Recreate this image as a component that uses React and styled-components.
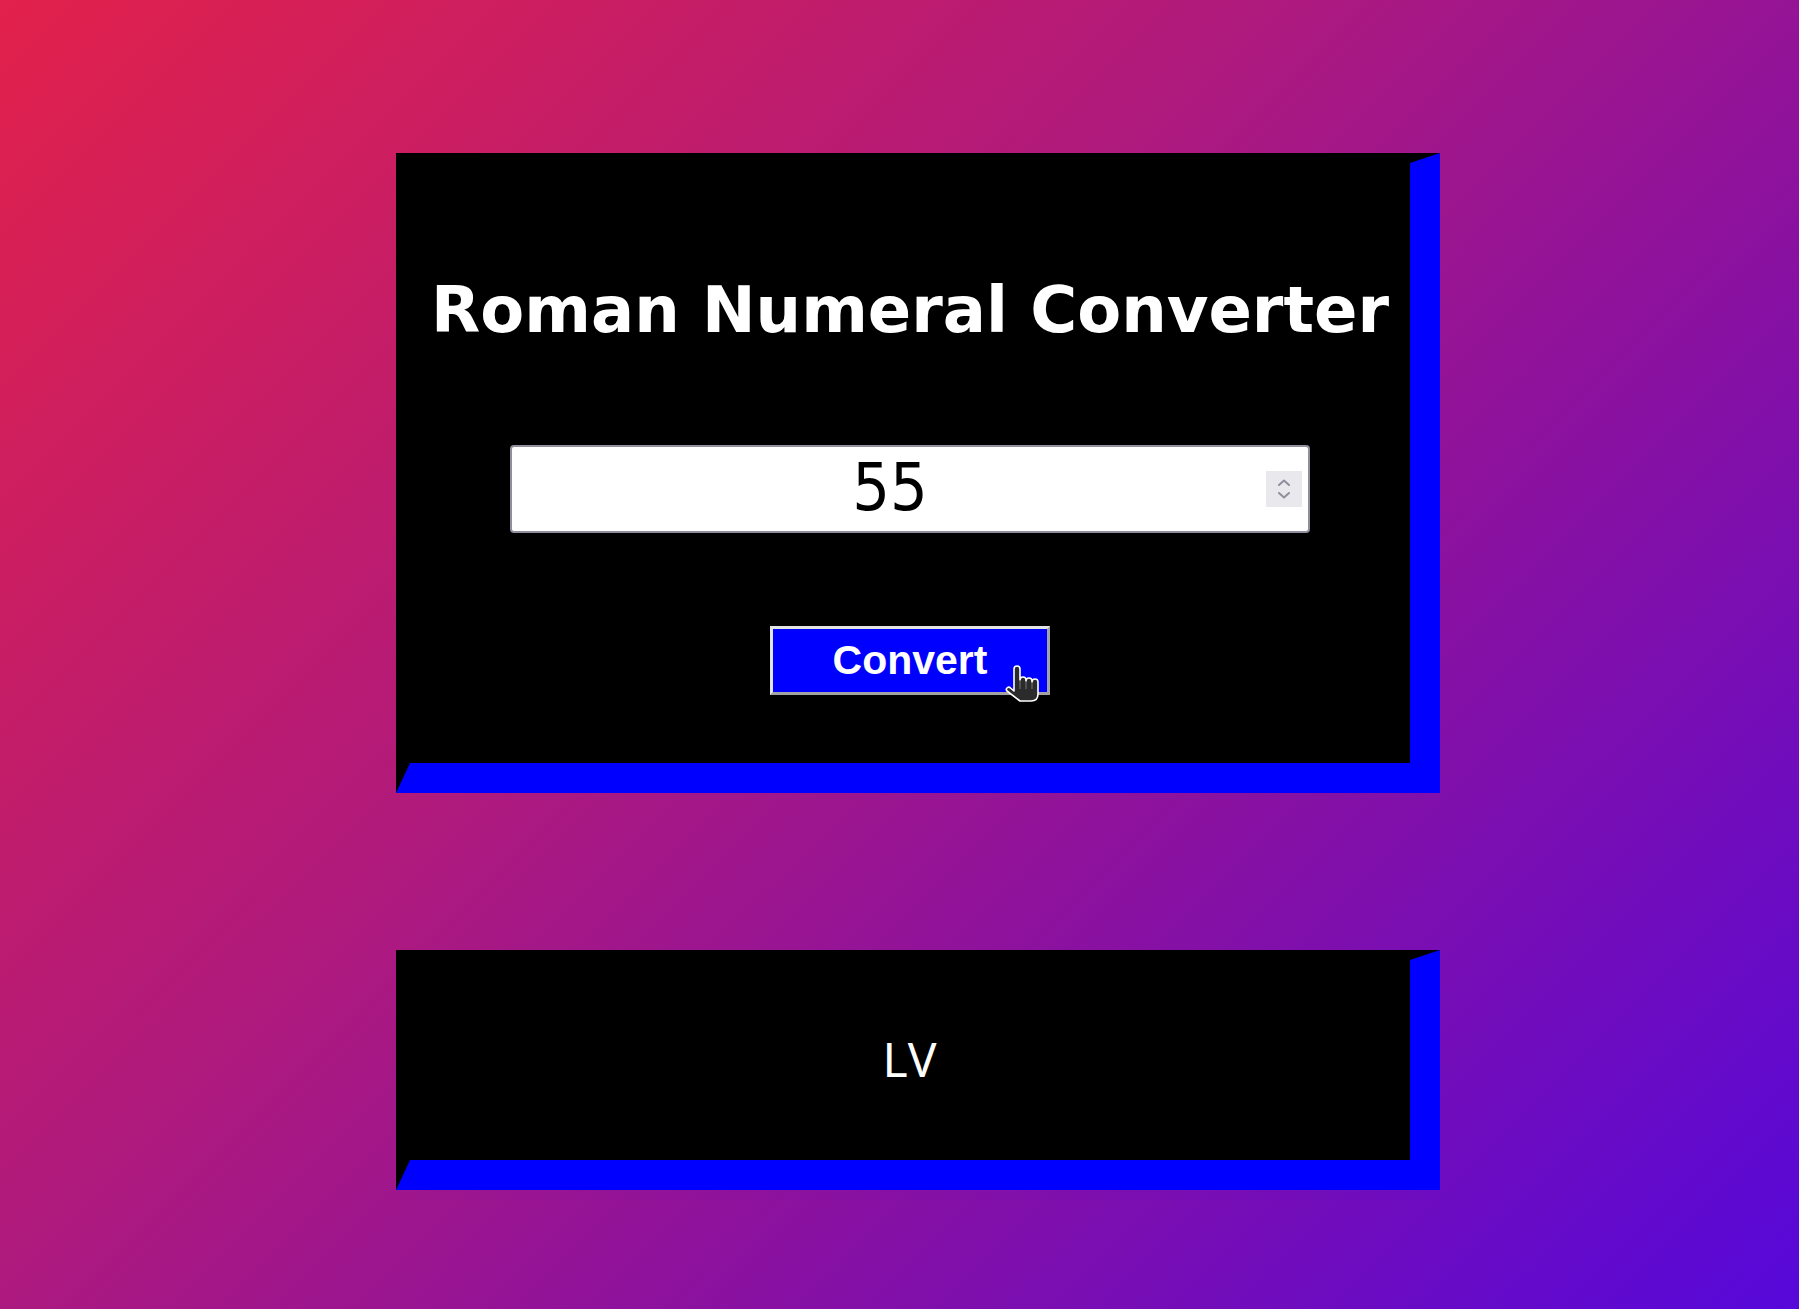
import React, { useState } from 'react'
import styled, { createGlobalStyle } from 'styled-components'

const BLUE = '#0000ff'

const GlobalStyle = createGlobalStyle`
  html, body {
    margin: 0;
    padding: 0;
    min-height: 100%;
  }
  body {
    min-height: 100vh;
    background: linear-gradient(135deg, #e2214b 0%, #b01a7c 40%, #8a11a0 65%, #5608da 100%);
    background-attachment: fixed;
  }
`

const Page = styled.main`
  display: flex;
  flex-direction: column;
  gap: 157px;
  padding: 153px 0 119px 396px;
`

const Card = styled.section`
  box-sizing: border-box;
  width: 1044px;
  height: ${(p) => p.$height}px;
  background: #000;
  border-style: solid;
  border-width: 10px 30px 30px 14px;
  border-color: #000 ${BLUE} ${BLUE} #000;
  display: flex;
  flex-direction: column;
  align-items: center;
  justify-content: ${(p) => (p.$centered ? 'center' : 'flex-start')};
  padding-top: ${(p) => (p.$centered ? 0 : 110)}px;
`

const Title = styled.h1`
  margin: 0;
  font-family: 'DejaVu Sans', sans-serif;
  font-weight: bold;
  font-size: 64px;
  line-height: normal;
  color: #fff;
`

const InputWrap = styled.div`
  position: relative;
  width: 800px;
  height: 88px;
  margin-top: 98px;
`

const NumberInput = styled.input`
  box-sizing: border-box;
  width: 100%;
  height: 100%;
  border: 2px solid #8f8f9d;
  border-radius: 4px;
  background: #fff;
  padding: 0 40px 4px 0;
  text-align: center;
  font-family: 'Liberation Sans Narrow', 'DejaVu Sans Condensed', 'Noto Sans', sans-serif;
  font-stretch: condensed;
  font-size: 66px;
  color: #000;
  outline: none;
  -moz-appearance: textfield;
  &::-webkit-inner-spin-button,
  &::-webkit-outer-spin-button {
    -webkit-appearance: none;
    margin: 0;
  }
`

const Spinner = styled.div`
  position: absolute;
  top: 26px;
  right: 8px;
  width: 36px;
  height: 36px;
  background: #e9e9ed;
  display: flex;
  flex-direction: column;
  align-items: center;
  justify-content: center;
  gap: 6px;
`

const ConvertButton = styled.button`
  position: relative;
  box-sizing: border-box;
  width: 280px;
  height: 69px;
  margin-top: 93px;
  background: ${BLUE};
  border: 3px solid;
  border-color: #e3e3e3 #a3a3a3 #a3a3a3 #e3e3e3;
  color: #fff;
  font-family: 'Liberation Sans', Arial, sans-serif;
  font-weight: bold;
  font-size: 41px;
  cursor: pointer;
  padding: 0;
`

const Cursor = styled.svg`
  position: absolute;
  left: 229px;
  top: 36px;
  pointer-events: none;
`

const Output = styled.p`
  margin: 0 0 4px;
  color: #fff;
  font-family: 'Noto Sans', sans-serif;
  font-size: 48px;
  letter-spacing: 1px;
`

const Chevron = ({ up }) => (
  <svg width="12" height="7" viewBox="0 0 12 7">
    <path
      d={up ? 'M1 6 L6 1.5 L11 6' : 'M1 1 L6 5.5 L11 1'}
      fill="none"
      stroke="#8f8f9d"
      strokeWidth="2"
      strokeLinecap="round"
      strokeLinejoin="round"
    />
  </svg>
)

const HandCursor = () => (
  <Cursor width="40" height="39" viewBox="0 0 40 39">
    <path
      d="M12 4 a3 3 0 0 1 6 0 V15 a3 3 0 0 1 6 0 v1 a3 3 0 0 1 6 0 v1 a3 3 0 0 1 6 0 V29 q0 7 -7 7 H18 L5 26 a2.2 2.2 0 0 1 3.5 -3 L12 26 Z"
      fill="#2b2b2b"
      stroke="#fff"
      strokeWidth="1.6"
      strokeLinejoin="round"
    />
    <path d="M18 16 V24 M24 17 V24 M30 18 V24" stroke="#777" strokeWidth="1" />
  </Cursor>
)

const App = () => {
  const [value, setValue] = useState('55')

  return (
    <>
      <GlobalStyle />
      <Page>
        <Card $height={640}>
          <Title>Roman Numeral Converter</Title>
          <InputWrap>
            <NumberInput type="number" value={value} onChange={(e) => setValue(e.target.value)} />
            <Spinner>
              <Chevron up />
              <Chevron />
            </Spinner>
          </InputWrap>
          <ConvertButton>
            Convert
            <HandCursor />
          </ConvertButton>
        </Card>
        <Card $height={240} $centered>
          <Output>LV</Output>
        </Card>
      </Page>
    </>
  )
}

export default App
